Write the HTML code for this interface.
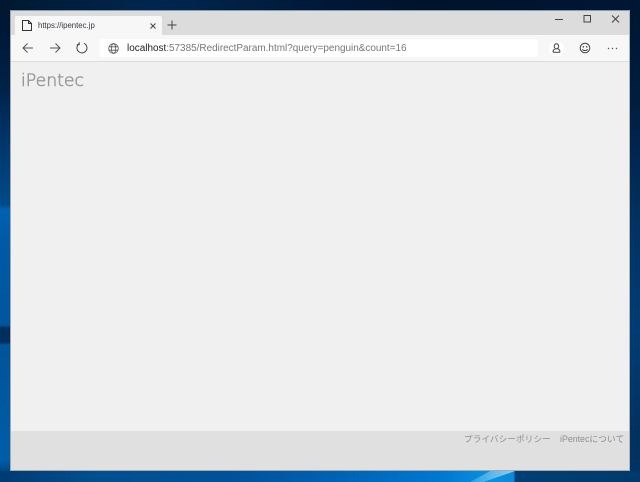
<!DOCTYPE html>
<html lang="ja">
<head>
<meta charset="utf-8">
<title>iPentec</title>
<style>
html,body{margin:0;padding:0;width:640px;height:482px;overflow:hidden;background:#00264f}
body{position:relative;font-family:"Liberation Sans","Noto Sans CJK JP",sans-serif}
.abs{position:absolute}
#win{left:10px;top:10px;width:620px;height:461px;background:#f0f0f0}
svg{position:absolute;overflow:visible}
</style>
</head>
<body>
<!-- desktop glimpses -->
<div class="abs" style="left:0;top:0;width:10px;height:482px;background:linear-gradient(180deg,#00142e 0,#001f45 80px,#00386e 150px,#004a8a 205px,#0062b0 209px,#005aa5 240px,#00559f 325px,#002f5f 328px,#002f5f 342px,#005499 345px,#005da8 460px,#00477f 472px,#004a85 482px)"></div>
<div class="abs" style="left:630px;top:0;width:10px;height:482px;background:linear-gradient(180deg,#00152f 0,#001d40 100px,#003364 230px,#003d74 330px,#00315f 440px,#003666 482px)"></div>
<div class="abs" style="left:0;top:0;width:640px;height:10px;background:linear-gradient(90deg,#00182f 0,#00264f 150px,#00254c 180px,#001a3a 300px,#00132c 420px,#001634 640px)"></div>
<div class="abs" style="left:0;top:471px;width:640px;height:11px;background:linear-gradient(90deg,#003a72 0,#00508f 100px,#005199 230px,#0062b5 340px,#0078d0 440px,#0a90e0 490px,#0c88d8 514px,#003f74 515px,#003a6c 640px)"></div>
<div class="abs" style="left:470px;top:471px;width:45px;height:11px;background:linear-gradient(90deg,#2a9fe6,#8fd2f4);clip-path:polygon(100% 0,45% 0,0 100%,30% 100%)"></div>

<div id="win" class="abs"></div>
<!-- window border -->
<div class="abs" style="left:10px;top:10px;width:620px;height:1px;background:#7f9db5"></div>
<div class="abs" style="left:10px;top:10px;width:1px;height:461px;background:#a0a8b0"></div>
<div class="abs" style="left:629px;top:10px;width:1px;height:461px;background:#b0b4b8"></div>
<div class="abs" style="left:10px;top:470px;width:620px;height:1px;background:#a8a8a8"></div>

<!-- title bar -->
<div class="abs" style="left:11px;top:11px;width:618px;height:24px;background:#dcdcdc"></div>
<!-- tab -->
<div class="abs" style="left:15px;top:16px;width:147px;height:19px;background:#f7f7f7;border-radius:2px 2px 0 0"></div>
<svg class="abs" style="left:22px;top:20px" width="11" height="11" viewBox="0 0 11 11"><path d="M.5 .5H6.5L9.5 3.5V10.5H.5ZM6.5 .5V3.5H9.5" fill="none" stroke="#333" stroke-width="1"/></svg>
<div class="abs" style="left:38px;top:20px;font-size:7.8px;line-height:11px;color:#3a3340;white-space:nowrap">https://ipentec.jp</div>
<svg class="abs" style="left:149px;top:22px" width="8" height="8" viewBox="0 0 8 8"><path d="M1.5 1.5L6.5 6.5M6.5 1.5L1.5 6.5" stroke="#444" stroke-width="1"/></svg>
<svg class="abs" style="left:167px;top:20px" width="10" height="10" viewBox="0 0 10 10"><path d="M5 .5V9.5M.5 5H9.5" stroke="#444" stroke-width="1"/></svg>
<!-- caption buttons -->
<svg class="abs" style="left:555px;top:14px" width="70" height="10" viewBox="0 0 70 10"><path d="M0 5.5H8" stroke="#444" stroke-width="1"/><path d="M29 1.5H35.5V8H29Z" fill="none" stroke="#444" stroke-width="1"/><path d="M57 1.5L64 8.5M64 1.5L57 8.5" stroke="#444" stroke-width="1"/></svg>

<!-- toolbar -->
<div class="abs" style="left:11px;top:35px;width:618px;height:26px;background:#f7f7f7"></div>
<div class="abs" style="left:11px;top:61px;width:618px;height:1px;background:#dcdcdc"></div>
<svg class="abs" style="left:22px;top:42px" width="12" height="12" viewBox="0 0 12 12"><path d="M11 6H1M5.5 1.5L1 6L5.5 10.5" fill="none" stroke="#555" stroke-width="1"/></svg>
<svg class="abs" style="left:49px;top:42px" width="12" height="12" viewBox="0 0 12 12"><path d="M1 6H11M6.5 1.5L11 6L6.5 10.5" fill="none" stroke="#555" stroke-width="1"/></svg>
<svg class="abs" style="left:76px;top:42px" width="12" height="12" viewBox="0 0 12 12"><path d="M3 1.8A5 5 0 1 0 8 1.3M3.2 .2V2.6H.8" fill="none" stroke="#444" stroke-width="1"/></svg>
<!-- address -->
<div class="abs" style="left:100px;top:39px;width:438px;height:18px;background:#fff;border-radius:2px"></div>
<svg class="abs" style="left:108px;top:43px" width="11" height="11" viewBox="0 0 11 11"><g fill="none" stroke="#555" stroke-width=".8"><circle cx="5.5" cy="5.5" r="4.8"/><ellipse cx="5.5" cy="5.5" rx="2.2" ry="4.8"/><path d="M.9 3.8H10.1M.9 7.2H10.1"/></g></svg>
<div class="abs" style="left:127px;top:42px;font-size:9.95px;line-height:13px;color:#777;white-space:nowrap"><span style="color:#222">localhost</span>:57385/RedirectParam.html?query=penguin&amp;count=16</div>
<!-- right icons -->
<div class="abs" style="left:549px;top:41px;width:15px;height:15px;border-radius:50%;background:#fff"></div>
<svg class="abs" style="left:552px;top:43px" width="9" height="10" viewBox="0 0 9 10"><path d="M4.5 .7A2.2 2.6 0 1 1 4.4 .7ZM1 9.3C1 6.8 2.5 6 3 5.8M8 9.3C8 6.8 6.5 6 6 5.8M1 9.3H8" fill="none" stroke="#444" stroke-width="1"/></svg>
<svg class="abs" style="left:579px;top:42px" width="12" height="12" viewBox="0 0 12 12"><circle cx="6" cy="6" r="4.8" fill="none" stroke="#444" stroke-width="1"/><circle cx="4.3" cy="4.8" r=".8" fill="#444"/><circle cx="7.7" cy="4.8" r=".8" fill="#444"/><path d="M3.4 7.2C4.5 9 7.5 9 8.6 7.2" fill="none" stroke="#444" stroke-width="1"/></svg>
<svg class="abs" style="left:607px;top:47px" width="11" height="3" viewBox="0 0 11 3"><circle cx="1.5" cy="1.5" r=".7" fill="#555"/><circle cx="5.5" cy="1.5" r=".7" fill="#555"/><circle cx="9.5" cy="1.5" r=".7" fill="#555"/></svg>

<!-- logo -->
<svg class="abs" style="left:20px;top:68px" width="66" height="22" viewBox="0 0 66 22"><text x="1" y="18" font-family="DejaVu Sans" font-weight="200" font-size="17" fill="#999" stroke="#999" stroke-width=".6" textLength="63" lengthAdjust="spacingAndGlyphs">iPentec</text></svg>

<!-- footer -->
<div class="abs" style="left:11px;top:431px;width:618px;height:39px;background:#e0e0e0"></div>
<div class="abs" style="left:464px;top:431.5px;font-size:8.7px;line-height:14px;color:#8e8e8e;white-space:nowrap">プライバシーポリシー</div>
<div class="abs" style="left:560px;top:431.5px;font-size:8.8px;line-height:14px;color:#8e8e8e;white-space:nowrap">iPentecについて</div>
</body>
</html>
